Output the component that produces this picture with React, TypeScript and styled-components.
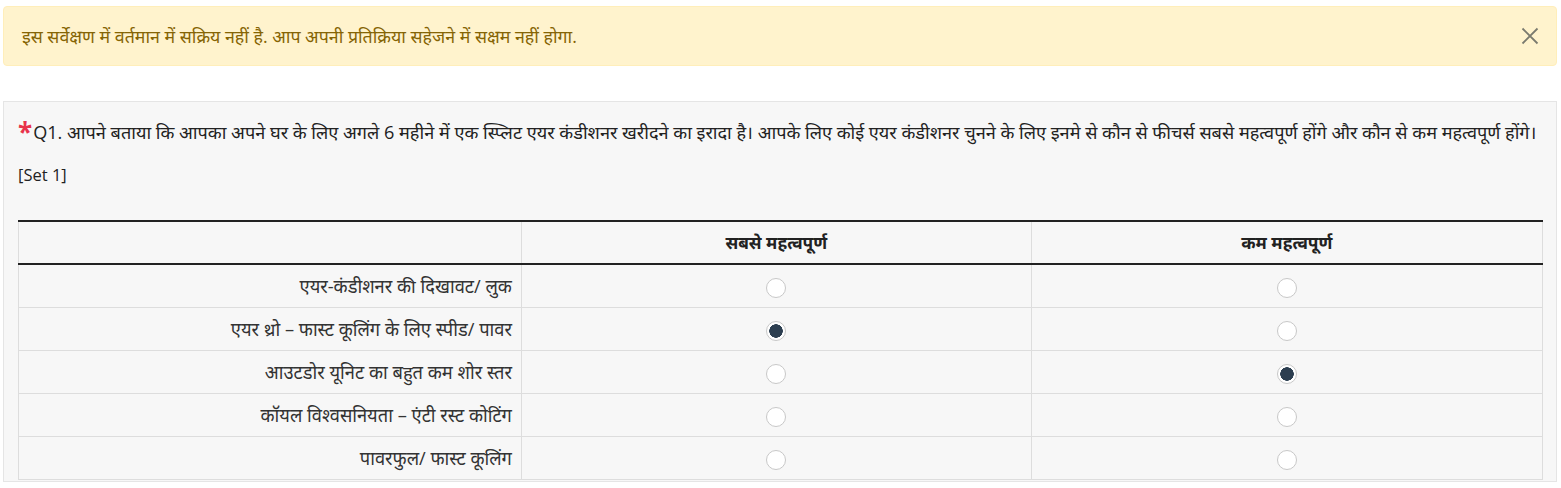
import React, { useState } from "react";
import styled, { createGlobalStyle } from "styled-components";

const Global = createGlobalStyle`
  html, body { margin: 0; padding: 0; background: #fff; }
  body { font-family: "Open Sans", "Noto Sans", sans-serif; color: #333; }
  * { box-sizing: border-box; }
`;

const Page = styled.div`
  padding: 6px 4px 0 3px;
  display: flex;
  flex-direction: column;
  gap: 35px;
`;

const Alert = styled.div`
  display: flex;
  align-items: center;
  justify-content: space-between;
  height: 60px;
  padding: 0 16px 0 18px;
  background: #fff3cd;
  border: 1px solid #ffeeba;
  border-radius: 4px;
  color: #856404;
  font-size: 17.8px;
`;

const CloseButton = styled.button`
  border: 0;
  background: transparent;
  padding: 0;
  width: 20px;
  height: 20px;
  display: flex;
  align-items: center;
  justify-content: center;
  cursor: pointer;
`;

const Panel = styled.div`
  background: #f7f7f7;
  border: 1px solid #e5e5e5;
  padding: 14px 13px 1px 14px;
`;

const Question = styled.div`
  font-size: 18.1px;
  line-height: 26px;
  color: #222;
  display: flex;
  align-items: baseline;
  white-space: nowrap;
`;

const Star = styled.span`
  color: #e8334a;
  font-size: 26px;
  line-height: 1;
  font-weight: 700;
  position: relative;
  top: 3px;
  margin-right: 1px;
`;

const SetLabel = styled.div`
  font-size: 16.5px;
  line-height: 22px;
  color: #222;
  margin-top: 19px;
  margin-bottom: 34px;
`;

const Table = styled.table`
  width: 100%;
  border-collapse: collapse;
  table-layout: fixed;
  border-top: 2px solid #222;
  border-left: 1px solid #ddd;
  border-right: 1px solid #ddd;
`;

const Col = styled.col<{ $w: string }>`
  width: ${(p) => p.$w};
`;

const Th = styled.th`
  height: 43px;
  border-bottom: 2px solid #222;
  border-left: 1px solid #ddd;
  font-weight: 700;
  font-size: 17.3px;
  color: #222;
  text-align: center;
  &:first-child { border-left: 0; }
`;

const Row = styled.tr`
  border-bottom: 1px solid #ddd;
`;

const LabelCell = styled.td`
  height: 43px;
  text-align: right;
  padding: 0 9px 0 0;
  font-size: 18.3px;
  color: #333;
  white-space: nowrap;
`;

const RadioCell = styled.td`
  height: 43px;
  text-align: center;
  border-left: 1px solid #ddd;
  vertical-align: middle;
`;

const Radio = styled.input.attrs({ type: "radio" })`
  appearance: none;
  -webkit-appearance: none;
  margin: 4px 0 0 0;
  width: 20px;
  height: 20px;
  border-radius: 50%;
  border: 1px solid #c8c8c8;
  background: #fff;
  vertical-align: middle;
  cursor: pointer;
  &:checked {
    background: radial-gradient(circle, #2c3e50 0 6.5px, #fff 7px);
  }
`;

const items = [
  "एयर-कंडीशनर की दिखावट/ लुक",
  "एयर थ्रो – फास्ट कूलिंग के लिए स्पीड/ पावर",
  "आउटडोर यूनिट का बहुत कम शोर स्तर",
  "कॉयल विश्वसनियता – एंटी रस्ट कोटिंग",
  "पावरफुल/ फास्ट कूलिंग",
];

export default function App() {
  const [most, setMost] = useState<number>(1);
  const [least, setLeast] = useState<number>(2);
  return (
    <>
      <Global />
      <Page>
        <Alert>
          <span>इस सर्वेक्षण में वर्तमान में सक्रिय नहीं है. आप अपनी प्रतिक्रिया सहेजने में सक्षम नहीं होगा.</span>
          <CloseButton aria-label="close">
            <svg width="18" height="18" viewBox="0 0 18 18">
              <path d="M1.5 1.5 L16.5 16.5 M16.5 1.5 L1.5 16.5" stroke="#7a7a6e" strokeWidth="1.8" />
            </svg>
          </CloseButton>
        </Alert>
        <Panel>
          <Question>
            <Star>*</Star>
            <span>
              Q1. आपने बताया कि आपका अपने घर के लिए अगले 6 महीने में एक स्प्लिट एयर कंडीशनर खरीदने का इरादा है। आपके लिए कोई एयर कंडीशनर चुनने के लिए इनमे से कौन से फीचर्स सबसे महत्वपूर्ण होंगे और कौन से कम महत्वपूर्ण होंगे।
            </span>
          </Question>
          <SetLabel>[Set 1]</SetLabel>
          <Table>
            <colgroup>
              <Col $w="33%" />
              <Col $w="33.45%" />
              <Col $w="33.55%" />
            </colgroup>
            <thead>
              <tr>
                <Th />
                <Th>सबसे महत्वपूर्ण</Th>
                <Th>कम महत्वपूर्ण</Th>
              </tr>
            </thead>
            <tbody>
              {items.map((label, i) => (
                <Row key={i}>
                  <LabelCell>{label}</LabelCell>
                  <RadioCell>
                    <Radio name="most" checked={most === i} onChange={() => setMost(i)} />
                  </RadioCell>
                  <RadioCell>
                    <Radio name="least" checked={least === i} onChange={() => setLeast(i)} />
                  </RadioCell>
                </Row>
              ))}
            </tbody>
          </Table>
        </Panel>
      </Page>
    </>
  );
}
